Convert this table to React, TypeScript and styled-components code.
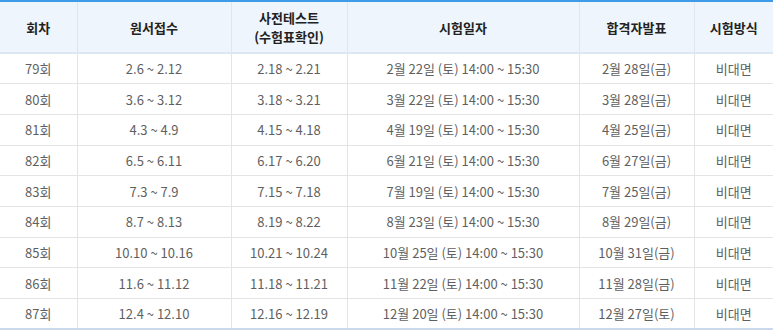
import React from "react";
import styled, { createGlobalStyle } from "styled-components";

const Global = createGlobalStyle`
  html, body { margin: 0; padding: 0; background: #ffffff; }
  body { font-family: "Noto Sans CJK KR", "Noto Sans", sans-serif; }
`;

const Table = styled.table`
  width: 773px;
  border-collapse: collapse;
  table-layout: fixed;
  border-top: 2px solid #3d9be9;
  border-bottom: 2px solid #c9d8ea;
  font-family: "Noto Sans CJK KR", "Noto Sans", sans-serif;
  font-size: 13px;
`;

const HeadCell = styled.th`
  height: 50px;
  padding: 0;
  background: #eef5fc;
  color: #222222;
  font-weight: 700;
  font-size: 13px;
  line-height: 19px;
  text-align: center;
  border-bottom: 2px solid #dde7f2;
  border-left: 1px solid #e2e6ea;
  &:first-child { border-left: none; }
`;

const Row = styled.tr`
  height: 30.7px;
  & + & td { border-top: 1px solid #e4e4e4; }
`;

const Cell = styled.td`
  padding: 0;
  color: #5f5f5f;
  text-align: center;
  white-space: nowrap;
  border-left: 1px solid #e4e4e4;
  &:first-child { border-left: none; }
`;

const cols = [77, 154, 116, 232, 115, 79];

const data: string[][] = [
  ["79회", "2.6 ~ 2.12", "2.18 ~ 2.21", "2월 22일 (토) 14:00 ~ 15:30", "2월 28일(금)", "비대면"],
  ["80회", "3.6 ~ 3.12", "3.18 ~ 3.21", "3월 22일 (토) 14:00 ~ 15:30", "3월 28일(금)", "비대면"],
  ["81회", "4.3 ~ 4.9", "4.15 ~ 4.18", "4월 19일 (토) 14:00 ~ 15:30", "4월 25일(금)", "비대면"],
  ["82회", "6.5 ~ 6.11", "6.17 ~ 6.20", "6월 21일 (토) 14:00 ~ 15:30", "6월 27일(금)", "비대면"],
  ["83회", "7.3 ~ 7.9", "7.15 ~ 7.18", "7월 19일 (토) 14:00 ~ 15:30", "7월 25일(금)", "비대면"],
  ["84회", "8.7 ~ 8.13", "8.19 ~ 8.22", "8월 23일 (토) 14:00 ~ 15:30", "8월 29일(금)", "비대면"],
  ["85회", "10.10 ~ 10.16", "10.21 ~ 10.24", "10월 25일 (토) 14:00 ~ 15:30", "10월 31일(금)", "비대면"],
  ["86회", "11.6 ~ 11.12", "11.18 ~ 11.21", "11월 22일 (토) 14:00 ~ 15:30", "11월 28일(금)", "비대면"],
  ["87회", "12.4 ~ 12.10", "12.16 ~ 12.19", "12월 20일 (토) 14:00 ~ 15:30", "12월 27일(토)", "비대면"],
];

export default function App() {
  return (
    <>
      <Global />
      <Table>
        <colgroup>
          {cols.map((w, i) => (
            <col key={i} style={{ width: w }} />
          ))}
        </colgroup>
        <thead>
          <tr>
            <HeadCell>회차</HeadCell>
            <HeadCell>원서접수</HeadCell>
            <HeadCell>
              사전테스트
              <br />
              (수험표확인)
            </HeadCell>
            <HeadCell>시험일자</HeadCell>
            <HeadCell>합격자발표</HeadCell>
            <HeadCell>시험방식</HeadCell>
          </tr>
        </thead>
        <tbody>
          {data.map((r) => (
            <Row key={r[0]}>
              {r.map((c, j) => (
                <Cell key={j}>{c}</Cell>
              ))}
            </Row>
          ))}
        </tbody>
      </Table>
    </>
  );
}
